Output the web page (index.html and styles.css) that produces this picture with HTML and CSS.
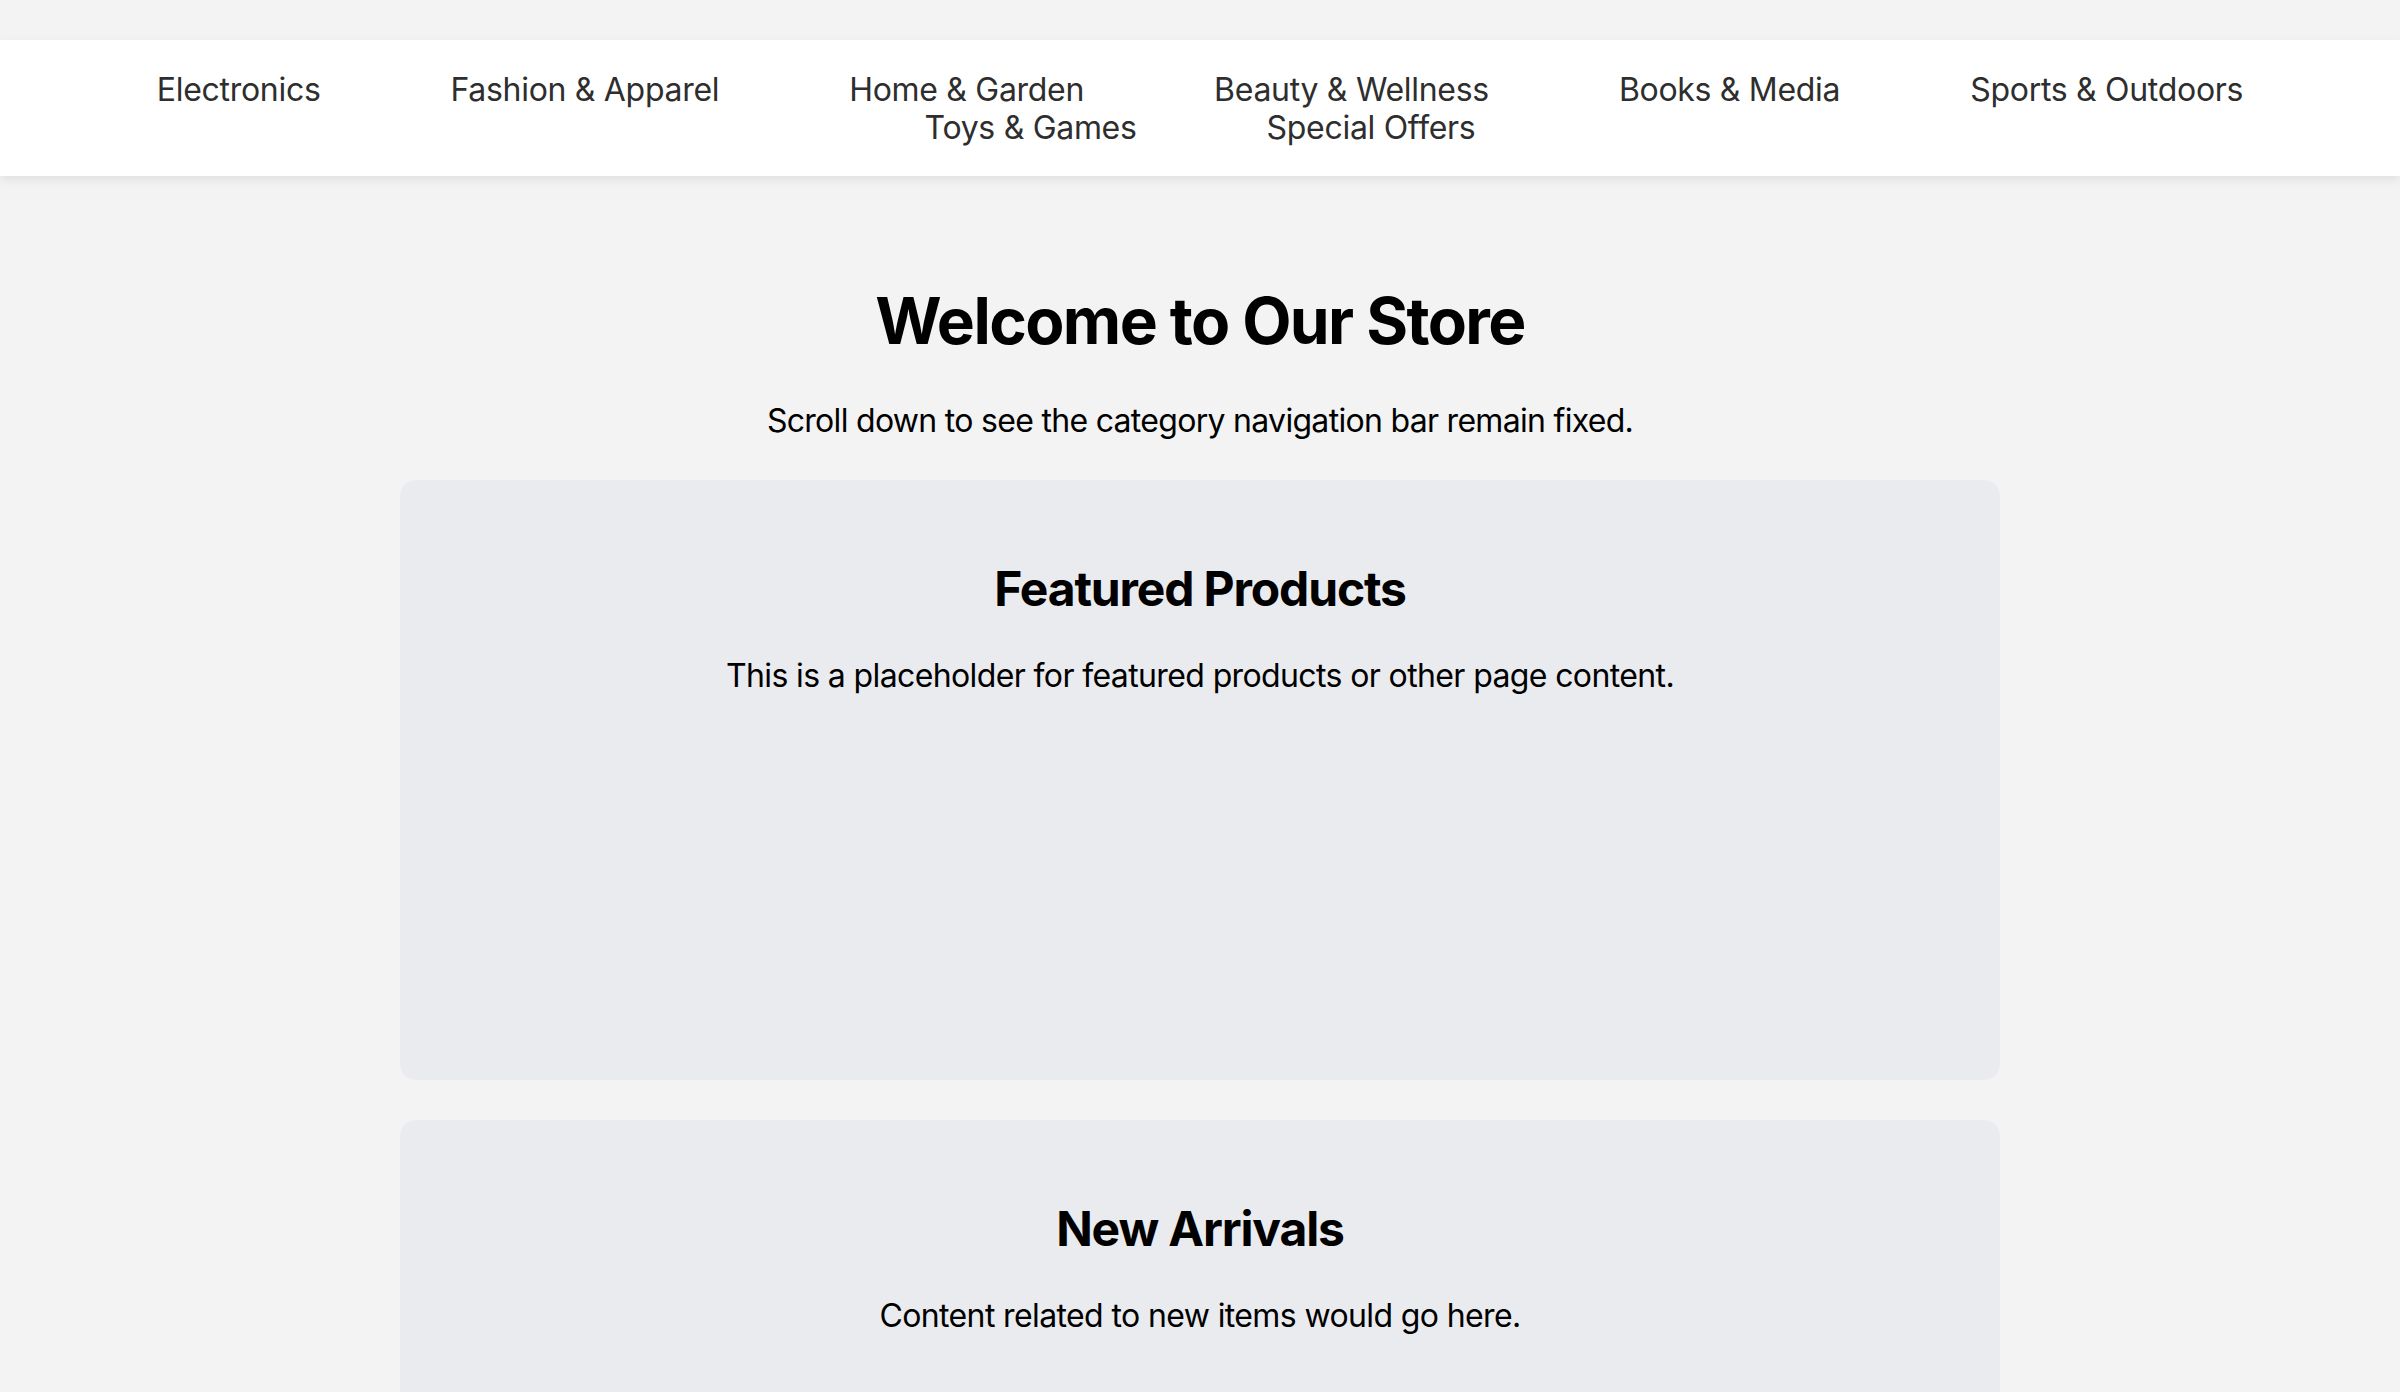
FILE: index.html
```html
<!DOCTYPE html>
<html lang="en">
<head>
<meta charset="utf-8">
<title>Store</title>
<link rel="stylesheet" href="styles.css">
</head>
<body>
<nav class="category-nav">
  <ul class="category-list">
    <li><a href="#">Electronics</a></li>
    <li><a href="#">Fashion &amp; Apparel</a></li>
    <li><a href="#">Home &amp; Garden</a></li>
    <li><a href="#">Beauty &amp; Wellness</a></li>
    <li><a href="#">Books &amp; Media</a></li>
    <li><a href="#">Sports &amp; Outdoors</a></li>
    <li><a href="#">Toys &amp; Games</a></li>
    <li><a href="#">Special Offers</a></li>
  </ul>
</nav>
<main class="content">
  <h1 class="title">Welcome to Our Store</h1>
  <p class="lead">Scroll down to see the category navigation bar remain fixed.</p>
  <section class="card">
    <h2>Featured Products</h2>
    <p>This is a placeholder for featured products or other page content.</p>
  </section>
  <section class="card">
    <h2>New Arrivals</h2>
    <p>Content related to new items would go here.</p>
  </section>
</main>
</body>
</html>
```
FILE: styles.css
```css
html, body {
  margin: 0;
  padding: 0;
}
body {
  background: #f3f3f3;
  font-family: Inter, "Noto Sans", "Liberation Sans", sans-serif;
  color: #000;
}
.category-nav {
  margin-top: 40px;
  background: #fff;
  box-shadow: 0 4px 10px rgba(0, 0, 0, 0.08);
  padding: 31px 0 29px;
  position: relative;
}
.category-list {
  list-style: none;
  margin: 0 auto;
  padding: 0;
  max-width: 2300px;
  display: flex;
  flex-wrap: wrap;
  justify-content: center;
  column-gap: 130px;
  row-gap: 0;
}
.category-list a {
  display: block;
  color: #2e2e2e;
  text-decoration: none;
  font-size: 32px;
  line-height: 38px;
  letter-spacing: -0.3px;
}
.content {
  padding: 64px 0 0;
  text-align: center;
}
.title {
  font-size: 64px;
  font-weight: 700;
  line-height: 76px;
  margin: 43px 0;
  letter-spacing: -1.6px;
}
.lead {
  font-size: 32px;
  line-height: 38px;
  margin: 32px 0;
  letter-spacing: -0.7px;
}
.card {
  box-sizing: border-box;
  width: 1600px;
  min-height: 600px;
  margin: 40px auto;
  padding: 40px;
  background: #eaebef;
  border-radius: 16px;
}
.card h2 {
  font-size: 48px;
  font-weight: 700;
  line-height: 57px;
  margin: 40px 0;
  letter-spacing: -1.15px;
}
.card p {
  font-size: 32px;
  line-height: 38px;
  margin: 32px 0;
  letter-spacing: -0.62px;
}
```
